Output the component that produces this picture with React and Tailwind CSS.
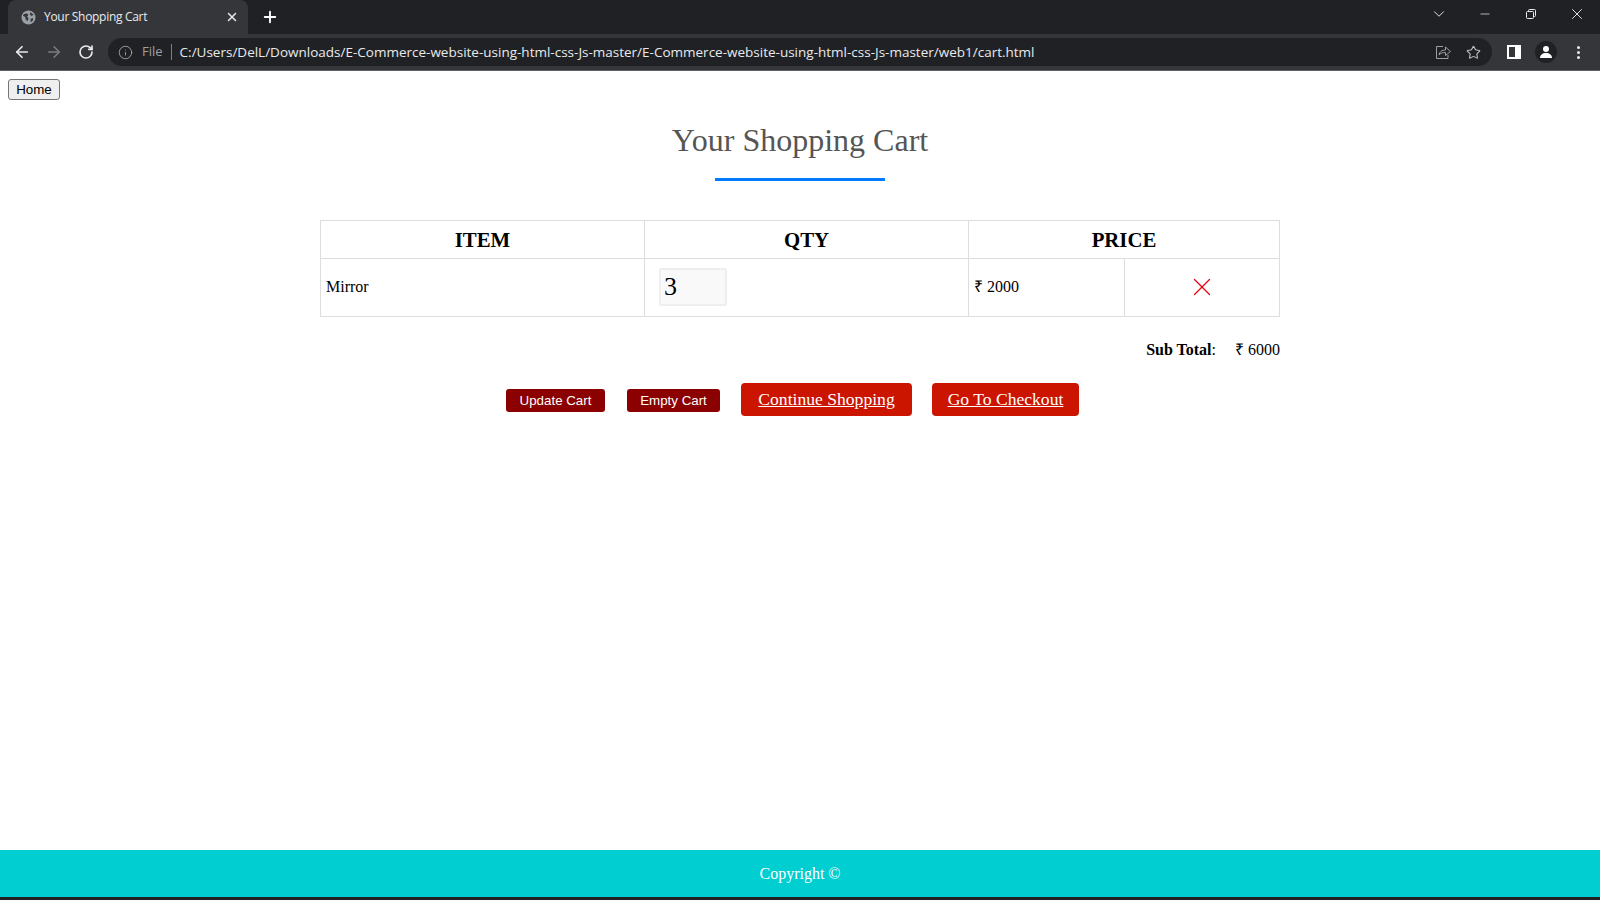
import React from "react";
import { ArrowLeft, ArrowRight, ChevronDown, Info, Minus, Plus, RotateCw, Star, X } from "lucide-react";

const serif = "font-['Liberation_Serif',serif]";

const BrowserChrome = () => (
  <div className="shrink-0 font-['Open_Sans',sans-serif]">
    {/* Tab strip */}
    <div className="flex h-[34px] items-end bg-[#202124]">
      <div className="ml-2 flex h-[34px] w-[240px] items-center rounded-t-lg bg-[#35363a] pl-[13px] pr-[9px]">
        <svg width="15" height="15" viewBox="0 0 16 16" className="shrink-0">
          <circle cx="8" cy="8" r="7.500" fill="#9aa0a6" />
          <path d="M3 4.500 6 3.500 8 5 6.500 7 8 9 7 12 5 10 4.500 7.500 2 6ZM10 2.500 13.500 5 11 6.500 9.500 4.500ZM10 9.500 13 8.500 12.500 11.500 10.500 13Z" fill="#35363a" />
        </svg>
        <span className="ml-2 flex-1 text-xs tracking-[-0.3px] text-[#e8eaed]">Your Shopping Cart</span>
        <X size={14} strokeWidth={2.5} className="text-[#e8eaed]" />
      </div>
      <Plus size={18} strokeWidth={2.5} className="mb-2 ml-[13px] text-white" />
      <div className="flex-1" />
      <div className="mb-[11px] flex items-center text-[#e8eaed]">
        <ChevronDown size={18} strokeWidth={1.25} className="mr-[30px]" />
        <Minus size={14} strokeWidth={1.25} className="mr-[33px]" />
        <svg width="12" height="12" viewBox="0 0 12 12" fill="none" stroke="currentColor" className="mr-[31px]">
          <rect x="1.500" y="3.500" width="7" height="7" rx="1" />
          <path d="M3.500 3.500V2.500a1 1 0 0 1 1-1h5a1 1 0 0 1 1 1v5a1 1 0 0 1-1 1h-1" />
        </svg>
        <X size={18} strokeWidth={1.25} className="mr-[14px]" />
      </div>
    </div>
    {/* Address bar */}
    <div className="flex h-[37px] items-center border-b border-b-[#5f6063] bg-[#35363a]">
      <ArrowLeft size={18} strokeWidth={2.25} className="ml-[13px] text-[#e8eaed]" />
      <ArrowRight size={18} strokeWidth={2} className="ml-[14px] text-[#7b7d80]" />
      <RotateCw size={16} strokeWidth={2.5} className="ml-[15px] text-[#e8eaed]" />
      <div className="ml-[14px] flex h-[28px] w-[1384px] items-center rounded-full bg-[#202124] pl-[10px] pr-[10px]">
        <Info size={15} strokeWidth={1.5} className="text-[#9aa0a6]" />
        <span className="ml-[9px] text-[13px] text-[#9aa0a6]">File</span>
        <span className="ml-2 mr-2 h-4 w-px bg-[#7b7d80]" />
        <span className="flex-1 text-[13.500px] text-[#e8eaed]">
          C:/Users/DelL/Downloads/E-Commerce-website-using-html-css-Js-master/E-Commerce-website-using-html-css-Js-master/web1/cart.html
        </span>
        <svg width="16" height="16" viewBox="0 0 16 16" fill="none" stroke="#9aa0a6" strokeWidth="1" className="mr-[15px]">
          <path d="M8 2.500H1.500V14.500H13V11" />
          <path d="M4 11c.5-3.500 3-5 6.500-5V3l5 4.500-5 4V8.500C8 8.500 5.500 9 4 11Z" />
        </svg>
        <Star size={15} strokeWidth={1.75} className="mr-[1px] text-[#bdc1c6]" />
      </div>
      <div className="ml-[15px] flex h-[14px] w-[14px] bg-white pl-[2px]">
        <div className="my-[2px] w-[6px] bg-[#35363a]" />
      </div>
      <div className="ml-[14px] flex h-[22px] w-[22px] items-center justify-center rounded-full bg-[#202124]">
        <svg width="14" height="14" viewBox="0 0 14 14" fill="white">
          <circle cx="7" cy="4" r="3" />
          <path d="M1 13c0-3 2.500-5 6-5s6 2 6 5Z" />
        </svg>
      </div>
      <div className="ml-[20px] flex flex-col gap-[2px]">
        <span className="h-[3px] w-[3px] rounded-full bg-[#e8eaed]" />
        <span className="h-[3px] w-[3px] rounded-full bg-[#e8eaed]" />
        <span className="h-[3px] w-[3px] rounded-full bg-[#e8eaed]" />
      </div>
    </div>
  </div>
);

const CartTable = () => (
  <table className="w-[959px] table-fixed border-collapse border border-[#dddddd]">
    <colgroup>
      <col className="w-[324px]" />
      <col className="w-[324px]" />
      <col className="w-[156px]" />
      <col className="w-[155px]" />
    </colgroup>
    <thead>
      <tr className="h-[38px] text-[20.800px] font-bold text-black">
        <th className="border border-[#dddddd] font-bold">ITEM</th>
        <th className="border border-[#dddddd] font-bold">QTY</th>
        <th colSpan={2} className="border border-[#dddddd] font-bold">PRICE</th>
      </tr>
    </thead>
    <tbody>
      <tr className="h-[58px] text-base text-black">
        <td className="border border-[#dddddd] pb-[2px] pl-[5px]">Mirror</td>
        <td className="border border-[#dddddd] pb-[2px] pl-[14px]">
          <div className="flex h-[38px] w-[68px] items-center rounded-[2px] border-2 border-[#eeeeee] bg-[#f9f9f9] pl-[3px] text-[26px] leading-none">
            3
          </div>
        </td>
        <td className="border border-[#dddddd] pb-[2px] pl-[5px]">₹ 2000</td>
        <td className="border border-[#dddddd] pb-[2px]">
          <X size={30} strokeWidth={1} className="mx-auto text-[#e8000f]" />
        </td>
      </tr>
    </tbody>
  </table>
);

const App = () => {
  return (
    <div className={`flex h-screen flex-col overflow-hidden bg-white ${serif}`}>
      <BrowserChrome />

      <div className="flex-1">
        <button className="ml-2 mt-2 flex h-[21px] w-[52px] items-center justify-center rounded-[3px] border border-[#767676] bg-[#efefef] font-['Liberation_Sans',sans-serif] text-[13.330px] text-black">
          Home
        </button>

        <div className="mx-auto flex w-[960px] flex-col items-center">
          <h1 className="mt-5 text-[32px] leading-[40px] text-[#555555]">Your Shopping Cart</h1>
          <div className="mt-[18px] h-[3px] w-[170px] bg-[#007bff]" />

          <div className="mt-[39px] w-full">
            <CartTable />
          </div>

          <div className="mt-[21px] flex w-full justify-end text-base text-black">
            <span className="font-bold">Sub Total</span>
            <span>:</span>
            <span className="ml-[19px]">₹ 6000</span>
          </div>

          <div className="mt-[21px] flex items-start pr-[15px]">
            <button className="mt-[6px] h-[23px] w-[99px] rounded-[3px] bg-[#8b0000] font-['Liberation_Sans',sans-serif] text-[13.330px] text-white">
              Update Cart
            </button>
            <button className="ml-[22px] mt-[6px] h-[23px] w-[93px] rounded-[3px] bg-[#8b0000] font-['Liberation_Sans',sans-serif] text-[13.330px] text-white">
              Empty Cart
            </button>
            <a className="ml-[21px] flex h-[33px] w-[171px] items-center justify-center rounded-[4px] bg-[#cc1500] text-[17.600px] text-white underline">
              Continue Shopping
            </a>
            <a className="ml-5 flex h-[33px] w-[147px] items-center justify-center rounded-[4px] bg-[#cc1500] text-[17.600px] text-white underline">
              Go To Checkout
            </a>
          </div>
        </div>
      </div>

      <footer className="flex h-[47px] shrink-0 items-center justify-center bg-[#00ced1] text-base text-white">
        Copyright ©
      </footer>
      <div className="h-[3px] shrink-0 bg-[#202124]" />
    </div>
  );
};

export default App;
